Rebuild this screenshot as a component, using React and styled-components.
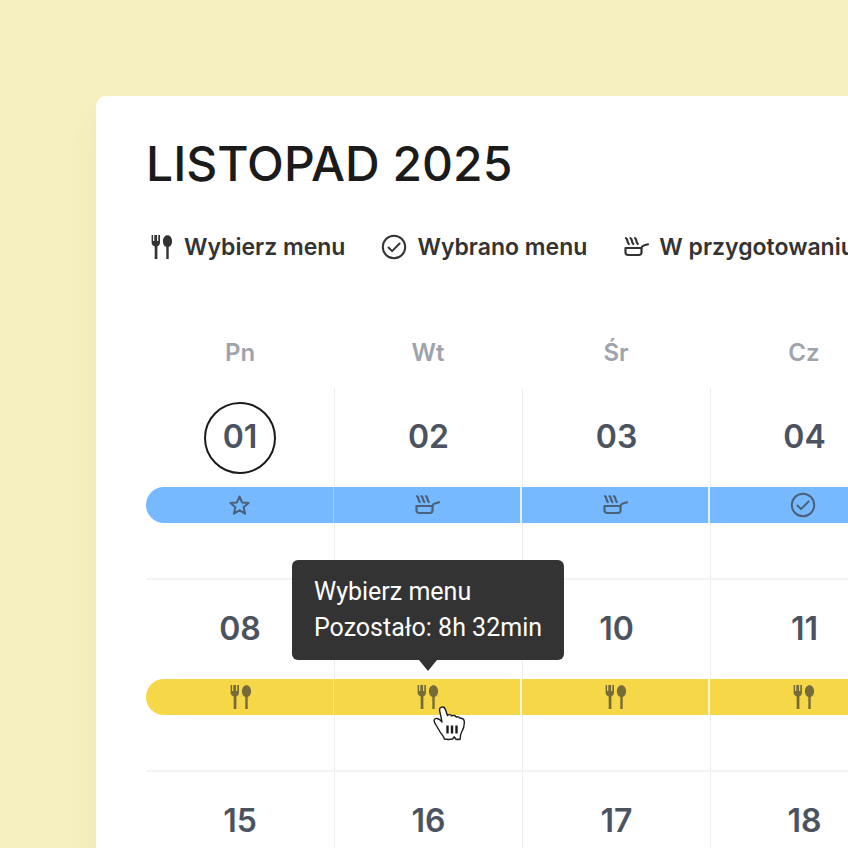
import styled, { createGlobalStyle } from "styled-components"

const GlobalStyle = createGlobalStyle`
    * {
        box-sizing: border-box;
    }
    body {
        margin: 0;
        background-color: #f6efbf;
        font-family: Inter, "Noto Sans", sans-serif;
    }
`;

const Page = styled.main`
    height: 100vh;
    padding: 96px 0 0 96px;
    overflow: hidden;
`;

const Card = styled.section`
    width: 100%;
    min-width: 852px;
    padding: 36px 50px;
    background-color: white;
    border-radius: 10px;
    box-shadow: 0 20px 30px rgba(90, 80, 0, 0.06);
`;

const Title = styled.h1`
    margin: 0;
    font-size: 48px;
    font-weight: 500;
    line-height: 64px;
    color: #1b1b1b;
`;

const Legend = styled.ul`
    display: flex;
    gap: 36px;
    margin: 36px 0 0;
    padding: 0 2px;
    list-style: none;
`;

const LegendItem = styled.li`
    display: flex;
    align-items: center;
    gap: 10px;
    font-size: 23px;
    font-weight: 600;
    line-height: 30px;
    white-space: nowrap;
    color: #333333;
`;

const Calendar = styled.table`
    width: 100%;
    margin-top: 76px;
    table-layout: fixed;
    border-collapse: separate;
    border-spacing: 0;
`;

const WeekDay = styled.th`
    height: 50px;
    padding: 0 0 20px;
    font-size: 24px;
    font-weight: 600;
    line-height: 30px;
    color: #9ea3ae;
`;

const Day = styled.td`
    height: 192px;
    padding: 14px 0 0;
    vertical-align: top;
    border-bottom: 2px solid #f3f3f4;

    & + & {
        border-left: 1px solid #eeeeef;
    }
`;

const DayNumber = styled.div`
    display: flex;
    align-items: center;
    justify-content: center;
    width: 72px;
    height: 72px;
    margin: 0 auto;
    padding-bottom: 4px;
    border: 2px solid ${props => props.$today ? '#1b1b1b' : 'transparent'};
    border-radius: 50%;
    font-size: 32px;
    font-weight: 600;
    color: #4b5361;
`;

const Slot = styled.div`
    position: relative;
    margin: 13px 0 0 ${props => props.$first ? '0' : '-1px'};
`;

const SlotButton = styled.button`
    display: flex;
    align-items: center;
    justify-content: center;
    width: 100%;
    height: 36px;
    padding: 0;
    border: none;
    border-right: ${props => props.$first ? '1px solid rgba(255, 255, 255, 0.3)' : '2px solid rgba(255, 255, 255, 0.8)'};
    border-radius: ${props => props.$first ? '18px 0 0 18px' : '0'};
    background-color: ${props => props.$color};
    color: #333333;
    cursor: pointer;

    svg {
        opacity: 0.65;
    }
`;

const Tooltip = styled.div`
    position: absolute;
    z-index: 1;
    left: 50%;
    bottom: calc(100% + 19px);
    transform: translateX(-50%);
    padding: 14px 22px;
    border-radius: 6px;
    background-color: #333333;
    color: white;
    font-family: Roboto, sans-serif;
    font-size: 25px;
    line-height: 36px;
    white-space: nowrap;

    &::after {
        content: "";
        position: absolute;
        top: 100%;
        left: 50%;
        margin-left: -9px;
        border: 9px solid transparent;
        border-top: 11px solid #333333;
        border-bottom: none;
    }
`;

const Pointer = styled.svg`
    position: absolute;
    z-index: 2;
    top: 26px;
    left: 50%;
    margin-left: 5px;
`;

const Cutlery = () => (
    <svg width="26" height="26" viewBox="0 0 26 26" fill="currentColor" aria-hidden="true">
        <path d="M3.6 1h1.5v6h1.200V1h2.800v6h1.200V1h1.700v7.200c0 2.300-1 3.600-2.600 4.200V25H6.700V12.400C4.700 11.800 3.600 10.500 3.600 8.200z" />
        <path d="M19.500 1.200c2.600 0 4.600 2.700 4.600 6 0 2.900-1.400 5-3.400 5.700V25h-2.400V12.900c-2-.7-3.400-2.800-3.400-5.700 0-3.300 2-6 4.600-6z" />
    </svg>
)

const CheckCircle = () => (
    <svg width="26" height="26" viewBox="0 0 26 26" fill="none" stroke="currentColor" strokeWidth="2" strokeLinecap="round" strokeLinejoin="round" aria-hidden="true">
        <circle cx="13" cy="13" r="11.2" />
        <path d="M7.500 13.500l3.600 3.600 7.500-7.600" />
    </svg>
)

const Pan = () => (
    <svg width="26" height="26" viewBox="0 0 26 26" fill="none" stroke="currentColor" strokeWidth="2.2" strokeLinecap="round" strokeLinejoin="round" aria-hidden="true">
        <path d="M2.500 14h16v4.500a2.500 2.500 0 0 1-2.500 2.500H5a2.500 2.500 0 0 1-2.500-2.500z" />
        <path d="M18.500 14c.3-1.500 1.100-2.200 2.300-2.500l4.200-1.200" />
        <path d="M3 4.200c2 .8.500 3.300 2.800 5.800M7.500 4.200c2 .8.500 3.300 2.800 5.800M12 4.200c2 .8.500 3.300 2.800 5.800" />
    </svg>
)

const Star = () => (
    <svg width="26" height="26" viewBox="0 0 26 26" fill="none" stroke="currentColor" strokeWidth="2" strokeLinejoin="round" aria-hidden="true">
        <path d="M12.500 4.500l2.500 5.900 6.500.6-4.900 4.300 1.500 6.400-5.600-3.400-5.600 3.400 1.500-6.400L3.500 11l6.500-.6z" />
    </svg>
)

const HandPointer = () => (
    <Pointer width="34" height="38" viewBox="0 0 34 38" aria-hidden="true">
        <path
            d="M8.500 2.200C10.600 1.600 12 3 12.600 5l1.800 5.500c.8-1.300 3.700-1.300 4.400.6 1.200-1.200 3.800-.8 4.400 1 1.200-.8 3.300-.3 3.900 1.200 2.200-.4 4 .8 4.200 3.200.3 4-.3 6.800-2.600 10.500-1.300 2-1.500 4.500-1.500 7-1.500.6-3 .6-4.500 0l-1.400-2.200-1.700 2.200c-2.500.6-5.500.6-8.200 0-.5-2.500-2.200-4.200-4-6.700-1.700-2.500-3-5-4.400-7.300-1.300-2.100-2.500-3.700-1.700-5.300 1-2 3.800-1.500 5.800.4l1.900 1.800L6.700 5.800C6.200 4 7 2.700 8.500 2.200z"
            fill="white"
            stroke="#1b1b1b"
            strokeWidth="1.4"
            strokeLinejoin="round"
        />
        <path d="M14.500 20.500v8M19 20.500v8M23.500 20.500v8" stroke="#1b1b1b" strokeWidth="2.4" />
    </Pointer>
)

const statuses = {
    choose: { label: 'Wybierz menu', icon: <Cutlery /> },
    chosen: { label: 'Wybrano menu', icon: <CheckCircle /> },
    cooking: { label: 'W przygotowaniu', icon: <Pan /> },
    rated: { label: 'Oceń', icon: <Star /> },
}

const legend = ['choose', 'chosen', 'cooking']
const weekDays = ['Pn', 'Wt', 'Śr', 'Cz']

const weeks = [
    {
        color: '#76b9ff',
        days: [
            { number: '01', status: 'rated', today: true },
            { number: '02', status: 'cooking' },
            { number: '03', status: 'cooking' },
            { number: '04', status: 'chosen' },
        ],
    },
    {
        color: '#f6d748',
        days: [
            { number: '08', status: 'choose' },
            { number: '09', status: 'choose', timeLeft: '8h 32min' },
            { number: '10', status: 'choose' },
            { number: '11', status: 'choose' },
        ],
    },
    {
        days: [{ number: '15' }, { number: '16' }, { number: '17' }, { number: '18' }],
    },
]

const MenuSlot = ({ day, color, first }) => {
    const { label, icon } = statuses[day.status]
    return (
        <Slot $first={first}>
            <SlotButton type="button" aria-label={label} $first={first} $color={color}>
                {icon}
            </SlotButton>
            {day.timeLeft && (
                <>
                    <Tooltip role="tooltip">
                        <div>{label}</div>
                        <div>Pozostało: {day.timeLeft}</div>
                    </Tooltip>
                    <HandPointer />
                </>
            )}
        </Slot>
    )
}

const App = () => {
  return (
    <Page>
        <GlobalStyle />
        <Card>
            <Title>LISTOPAD 2025</Title>
            <Legend>
                {legend.map(name => (
                    <LegendItem key={name}>
                        {statuses[name].icon}
                        <span>{statuses[name].label}</span>
                    </LegendItem>
                ))}
            </Legend>
            <Calendar>
                <thead>
                    <tr>
                        {weekDays.map(name => <WeekDay key={name} scope="col">{name}</WeekDay>)}
                    </tr>
                </thead>
                <tbody>
                    {weeks.map(week => (
                        <tr key={week.days[0].number}>
                            {week.days.map((day, i) => (
                                <Day key={day.number}>
                                    <DayNumber $today={day.today}>{day.number}</DayNumber>
                                    {day.status && <MenuSlot day={day} color={week.color} first={i === 0} />}
                                </Day>
                            ))}
                        </tr>
                    ))}
                </tbody>
            </Calendar>
        </Card>
    </Page>
  )
}

export default App
